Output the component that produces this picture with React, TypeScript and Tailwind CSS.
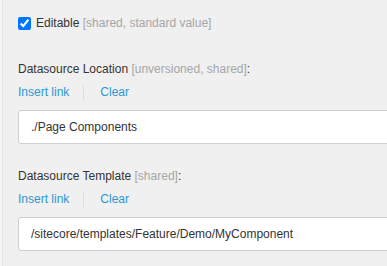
import React from "react";

function LinkBar() {
  return (
    <div className="mt-[9px] flex h-[14px] items-center leading-[14px] text-[#2b97d4]">
      <span>Insert link</span>
      <span className="ml-[14px] mr-[16px] h-[15px] w-px bg-[#dcdcdc]" />
      <span>Clear</span>
    </div>
  );
}

function Field({ label, note, value }: { label: string; note: string; value: string }) {
  return (
    <div>
      <div className="h-[14px] leading-[14px] text-[#333]">
        {label} <span className="text-[#a6a6a6]">{note}</span>:
      </div>
      <LinkBar />
      <div className="mt-[11px] flex h-[34px] w-[420px] items-center rounded-l-[3px] border border-[#cfcfcf] bg-white pl-[12px] text-[#333]">
        {value}
      </div>
    </div>
  );
}

export default function App() {
  return (
    <div
      className="h-[266px] w-[387px] overflow-hidden bg-[#f0f0f0] text-[12px]"
      style={{ fontFamily: '"Liberation Sans", Arial, sans-serif' }}
    >
      <div className="flex h-full">
        <div className="w-[2px] shrink-0 bg-[#f5f5f5]" />
        <div className="w-px shrink-0 bg-[#e4e4e4]" />
        <div className="min-w-0 flex-1 pl-[15px] pt-[16px]">
          <div className="flex h-[14px] items-center leading-[14px]">
            <input type="checkbox" checked readOnly className="h-[13px] w-[13px]" />
            <span className="ml-[5px] text-[#333]">
              Editable <span className="text-[#a6a6a6]">[shared, standard value]</span>
            </span>
          </div>
          <div className="mt-[32px] flex flex-col gap-[25px]">
            <Field label="Datasource Location" note="[unversioned, shared]" value="./Page Components" />
            <Field
              label="Datasource Template"
              note="[shared]"
              value="/sitecore/templates/Feature/Demo/MyComponent"
            />
          </div>
        </div>
      </div>
    </div>
  );
}
